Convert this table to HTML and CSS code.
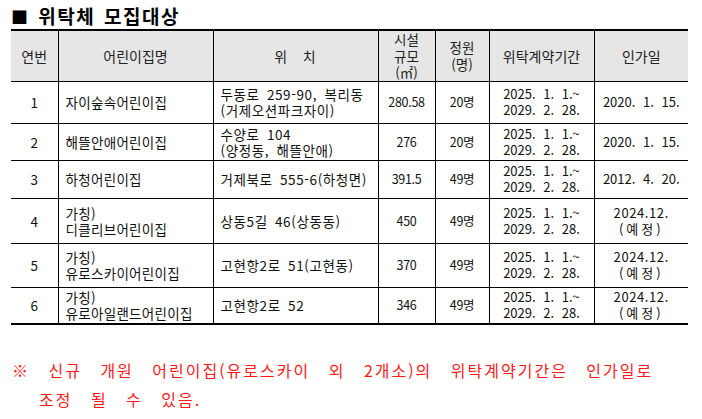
FILE: index.html
```html
<!DOCTYPE html>
<html lang="ko">
<head>
<meta charset="utf-8">
<link rel="stylesheet" href="styles.css">
</head>
<body>
<div class="page">
  <h1 class="title"><span class="sq">■</span> 위탁체 모집대상</h1>
  <table class="tbl">
    <colgroup>
      <col class="c1"><col class="c2"><col class="c3"><col class="c4"><col class="c5"><col class="c6"><col class="c7">
    </colgroup>
    <thead>
      <tr class="hrow">
        <th>연번</th>
        <th>어린이집명</th>
        <th class="wide">위 &nbsp; 치</th>
        <th class="tight">시설<br>규모<br>(㎡)</th>
        <th class="tight">정원<br>(명)</th>
        <th>위탁계약기간</th>
        <th>인가일</th>
      </tr>
    </thead>
    <tbody>
      <tr class="r1">
        <td class="ctr">1</td>
        <td class="lft">자이숲속어린이집</td>
        <td class="lft addr two">두동로 259-90, 복리동<br>(거제오션파크자이)</td>
        <td class="ctr num">280.58</td>
        <td class="ctr num">20명</td>
        <td class="ctr date">2025. 1. 1.~<br>2029. 2. 28.</td>
        <td class="ctr date">2020. 1. 15.</td>
      </tr>
      <tr class="r2">
        <td class="ctr">2</td>
        <td class="lft">해뜰안애어린이집</td>
        <td class="lft addr two">수양로 104<br>(양정동, 해뜰안애)</td>
        <td class="ctr num">276</td>
        <td class="ctr num">20명</td>
        <td class="ctr date">2025. 1. 1.~<br>2029. 2. 28.</td>
        <td class="ctr date">2020. 1. 15.</td>
      </tr>
      <tr class="r3">
        <td class="ctr">3</td>
        <td class="lft">하청어린이집</td>
        <td class="lft addr">거제북로 555-6(하청면)</td>
        <td class="ctr num">391.5</td>
        <td class="ctr num">49명</td>
        <td class="ctr date">2025. 1. 1.~<br>2029. 2. 28.</td>
        <td class="ctr date">2012. 4. 20.</td>
      </tr>
      <tr class="r4">
        <td class="ctr">4</td>
        <td class="lft two">가칭)<br>디클리브어린이집</td>
        <td class="lft addr">상동5길 46(상동동)</td>
        <td class="ctr num">450</td>
        <td class="ctr num">49명</td>
        <td class="ctr date">2025. 1. 1.~<br>2029. 2. 28.</td>
        <td class="ctr two plan">2024.12.<br><span class="pp">(예정)</span></td>
      </tr>
      <tr class="r5">
        <td class="ctr">5</td>
        <td class="lft two">가칭)<br>유로스카이어린이집</td>
        <td class="lft addr">고현항2로 51(고현동)</td>
        <td class="ctr num">370</td>
        <td class="ctr num">49명</td>
        <td class="ctr date">2025. 1. 1.~<br>2029. 2. 28.</td>
        <td class="ctr two plan">2024.12.<br><span class="pp">(예정)</span></td>
      </tr>
      <tr class="r6">
        <td class="ctr">6</td>
        <td class="lft two">가칭)<br>유로아일랜드어린이집</td>
        <td class="lft addr">고현항2로 52</td>
        <td class="ctr num">346</td>
        <td class="ctr num">49명</td>
        <td class="ctr date">2025. 1. 1.~<br>2029. 2. 28.</td>
        <td class="ctr two plan">2024.12.<br><span class="pp">(예정)</span></td>
      </tr>
    </tbody>
  </table>
  <p class="note">
    <span class="line1">※ 신규 개원 어린이집(유로스카이 외 2개소)의 위탁계약기간은 인가일로</span>
    <span class="line2">조정 될 수 있음.</span>
  </p>
</div>
</body>
</html>
```

FILE: styles.css
```css
html, body {
  margin: 0;
  padding: 0;
  background: #ffffff;
}

.page {
  padding: 4px 0 0 11px;
  width: 677px;
  font-family: "Noto Sans CJK KR", "Noto Sans", sans-serif;
  color: #111;
}

.title {
  margin: 0;
  height: 25px;
  font-size: 19px;
  line-height: 24px;
  font-weight: 700;
  color: #000;
  letter-spacing: 1.5px;
  word-spacing: 2px;
}

.title .sq {
  font-size: 17px;
}

.tbl {
  border-collapse: collapse;
  table-layout: fixed;
  width: 677px;
  font-size: 13.5px;
}

.c1 { width: 47px; }
.c2 { width: 155px; }
.c3 { width: 165px; }
.c4 { width: 57px; }
.c5 { width: 54px; }
.c6 { width: 105px; }
.c7 { width: 94px; }

.tbl th,
.tbl td {
  padding: 0;
  border: 1px solid #000;
  vertical-align: middle;
  overflow: hidden;
  white-space: nowrap;
}

.tbl tr > :first-child { border-left: none; }
.tbl tr > :last-child { border-right: none; }

.tbl thead th {
  border-top: 2px solid #000;
  background: #e6e6e6;
  font-weight: 400;
  font-size: 14px;
  color: #222;
  text-align: center;
  line-height: 16px;
}

.tbl thead th.wide { letter-spacing: 1px; }
.tbl thead th.tight { font-size: 13.5px; line-height: 16.5px; }

.hrow { height: 51px; }
.r1 { height: 42px; }
.r2 { height: 37px; }
.r3 { height: 38px; }
.r4 { height: 45px; }
.r5 { height: 44px; }
.r6 { height: 37px; }

.tbl tbody tr:last-child td { border-bottom: 2px solid #000; }

.tbl td {
  line-height: 16px;
  color: #111;
}

.ctr { text-align: center; }
.lft { text-align: left; padding-left: 7px !important; letter-spacing: 0.3px; }
.addr { letter-spacing: 0.6px; word-spacing: 3px; }
.two { line-height: 17px; }

.num { font-size: 12.5px; letter-spacing: -0.3px; }

.date {
  font-size: 13px;
  letter-spacing: 0;
  line-height: 16px;
  word-spacing: 4px;
}

.plan {
  font-size: 13px;
  letter-spacing: 0.6px;
  line-height: 17px;
}

.pp { letter-spacing: 3px; }

.note {
  margin: 31px 0 0 1px;
  color: #ff1a1a;
  font-size: 16px;
  line-height: 29px;
  letter-spacing: 2px;
  word-spacing: 12px;
}

.note span { display: block; white-space: nowrap; }
.note .line2 { padding-left: 27px; }
```
